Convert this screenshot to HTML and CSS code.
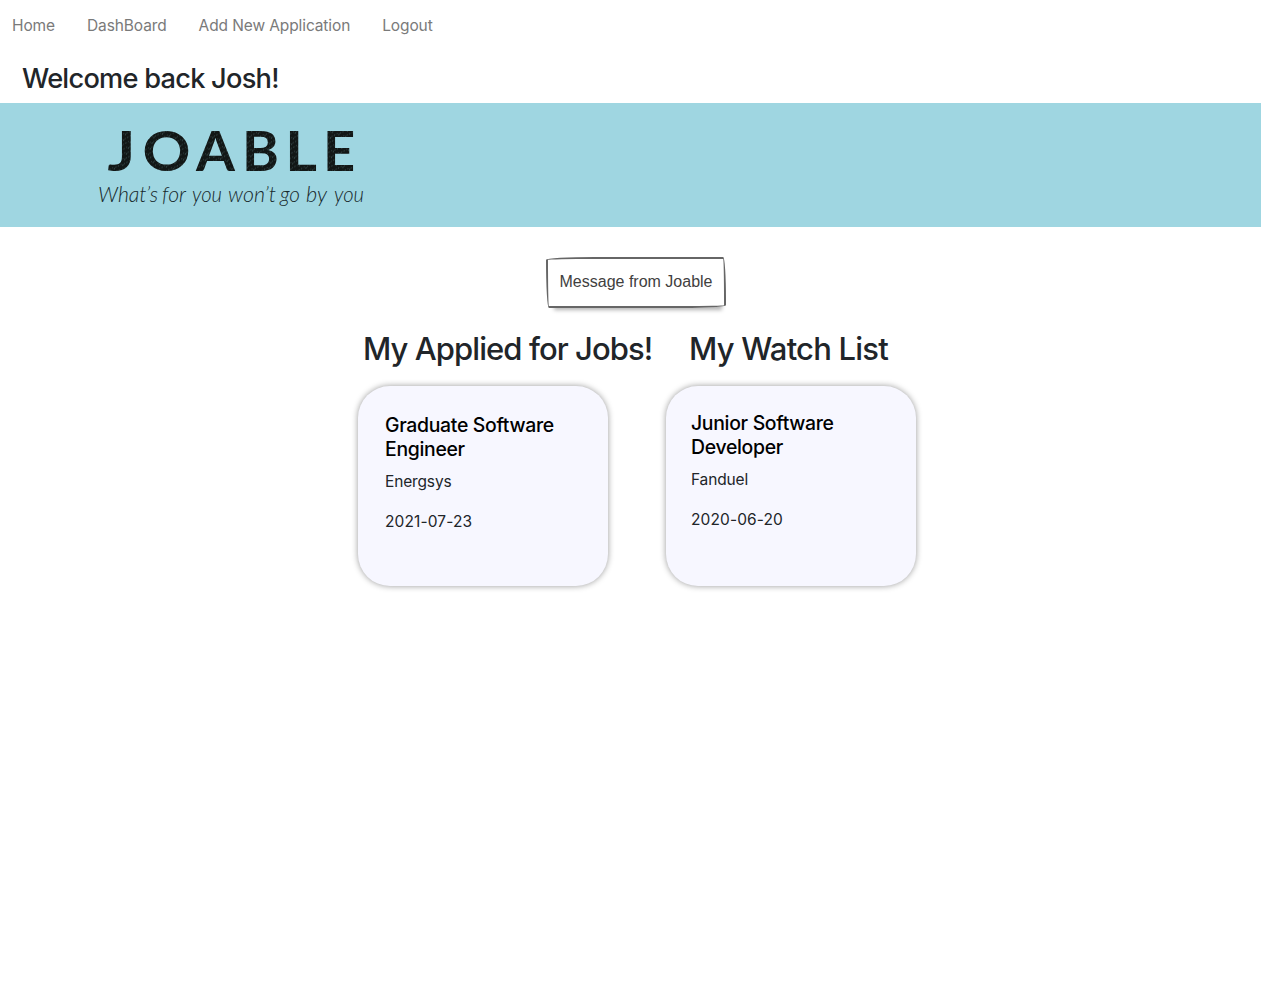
FILE: index.html
```html
<!DOCTYPE html>
<html lang="en">
<head>
<meta charset="utf-8">
<title>Joable</title>
<link rel="stylesheet" href="styles.css">
</head>
<body>
<nav class="nav">
<a class="nav-link">Home</a>
<a class="nav-link">DashBoard</a>
<a class="nav-link">Add New Application</a>
<a class="nav-link">Logout</a>
</nav>
<h3 class="welcome">Welcome back Josh!</h3>
<header class="banner">
<svg class="logo" width="290" height="124" viewBox="0 0 290 124" role="img" aria-label="Joable">
<defs>
<pattern id="grain" width="7" height="6" patternUnits="userSpaceOnUse" patternTransform="rotate(18)">
<rect width="7" height="6" fill="#121716"/>
<path d="M1 1h1M4 3h.8M2 5h.7M6 .8h.6" stroke="#5d7c80" stroke-width=".8"/>
</pattern>
</defs>
<g class="wordmark" fill="url(#grain)">
<text x="17.5" y="68" textLength="28" lengthAdjust="spacingAndGlyphs">J</text>
<text x="52.5" y="68" textLength="48" lengthAdjust="spacingAndGlyphs">O</text>
<text x="106" y="68">A</text>
<text x="152" y="68">B</text>
<text x="195" y="68" textLength="32" lengthAdjust="spacingAndGlyphs">L</text>
<text x="233" y="68">E</text>
</g>
<g class="tagline">
<text x="8" y="99" textLength="60" lengthAdjust="spacingAndGlyphs">What’s</text>
<text x="72" y="99" textLength="24" lengthAdjust="spacingAndGlyphs">for</text>
<text x="102" y="99" textLength="30" lengthAdjust="spacingAndGlyphs">you</text>
<text x="138" y="99" textLength="48" lengthAdjust="spacingAndGlyphs">won’t</text>
<text x="190" y="99" textLength="20" lengthAdjust="spacingAndGlyphs">go</text>
<text x="216" y="99" textLength="21" lengthAdjust="spacingAndGlyphs">by</text>
<text x="244" y="99" textLength="30" lengthAdjust="spacingAndGlyphs">you</text>
</g>
</svg>
</header>
<main>
<button class="message">Message from Joable</button>
<div class="lists">
<section class="list applied">
<h2>My Applied for Jobs!</h2>
<article class="card">
<h5>Graduate Software Engineer</h5>
<p>Energsys</p>
<p class="date">2021-07-23</p>
</article>
</section>
<section class="list watch">
<h2>My Watch List</h2>
<article class="card">
<h5>Junior Software Developer</h5>
<p>Fanduel</p>
<p class="date">2020-06-20</p>
</article>
</section>
</div>
</main>
</body>
</html>
```
FILE: styles.css
```css
* { box-sizing: border-box; }
body { margin: 0; min-height: 100vh; background: #fff; color: #212529; font: 400 15.5px/24px Inter, "Liberation Sans", sans-serif; }
h2, h3, h5, p { margin: 0; }
.nav { display: flex; gap: 32px; padding: 14px 12px 0; height: 59px; letter-spacing: -.11px; }
.nav-link { color: #7a7a7a; }
.welcome { height: 44px; padding: 3px 22px 0; font-size: 27.2px; line-height: 34px; font-weight: 500; letter-spacing: -.75px; }
.banner { height: 124px; padding-left: 90px; background: #9fd6e1; }
.logo { display: block; }
.wordmark { font: 700 56px Lato, sans-serif; }
.tagline { font: italic 300 21px Lato, sans-serif; fill: #17292c; }
main { display: flex; flex-direction: column; padding-bottom: 20px; }
.message { width: 180px; height: 51px; margin: 30px 0 0 546px; padding: 0 0 2px; color: #41403e; background: transparent; font: 400 16px "Liberation Sans", sans-serif; border: 2px solid #666; border-radius: 255px 15px 225px 15px / 15px 225px 15px 255px; box-shadow: 2px 8px 4px -6px rgba(0, 0, 0, .3); }
.lists { display: flex; gap: 58px; padding: 22px 0 0 358px; }
.list { width: 250px; }
.list h2 { height: 56px; padding: 0 0 0 5px; font-size: 31px; line-height: 38px; font-weight: 500; letter-spacing: -.93px; white-space: nowrap; }
.list.watch h2 { padding-left: 23px; letter-spacing: -.8px; }
.card { height: 200px; padding: 27px; border-radius: 32px; background: #f7f7ff; box-shadow: 0 0 6px rgba(0, 0, 0, .4); }
.watch .card { padding: 25px; }
.card h5 { margin-bottom: 9px; color: #000; font-size: 19.4px; line-height: 24px; font-weight: 500; letter-spacing: -.3px; }
.card p { margin-bottom: 16px; letter-spacing: -.15px; }
.card .date { letter-spacing: .12px; }
```
